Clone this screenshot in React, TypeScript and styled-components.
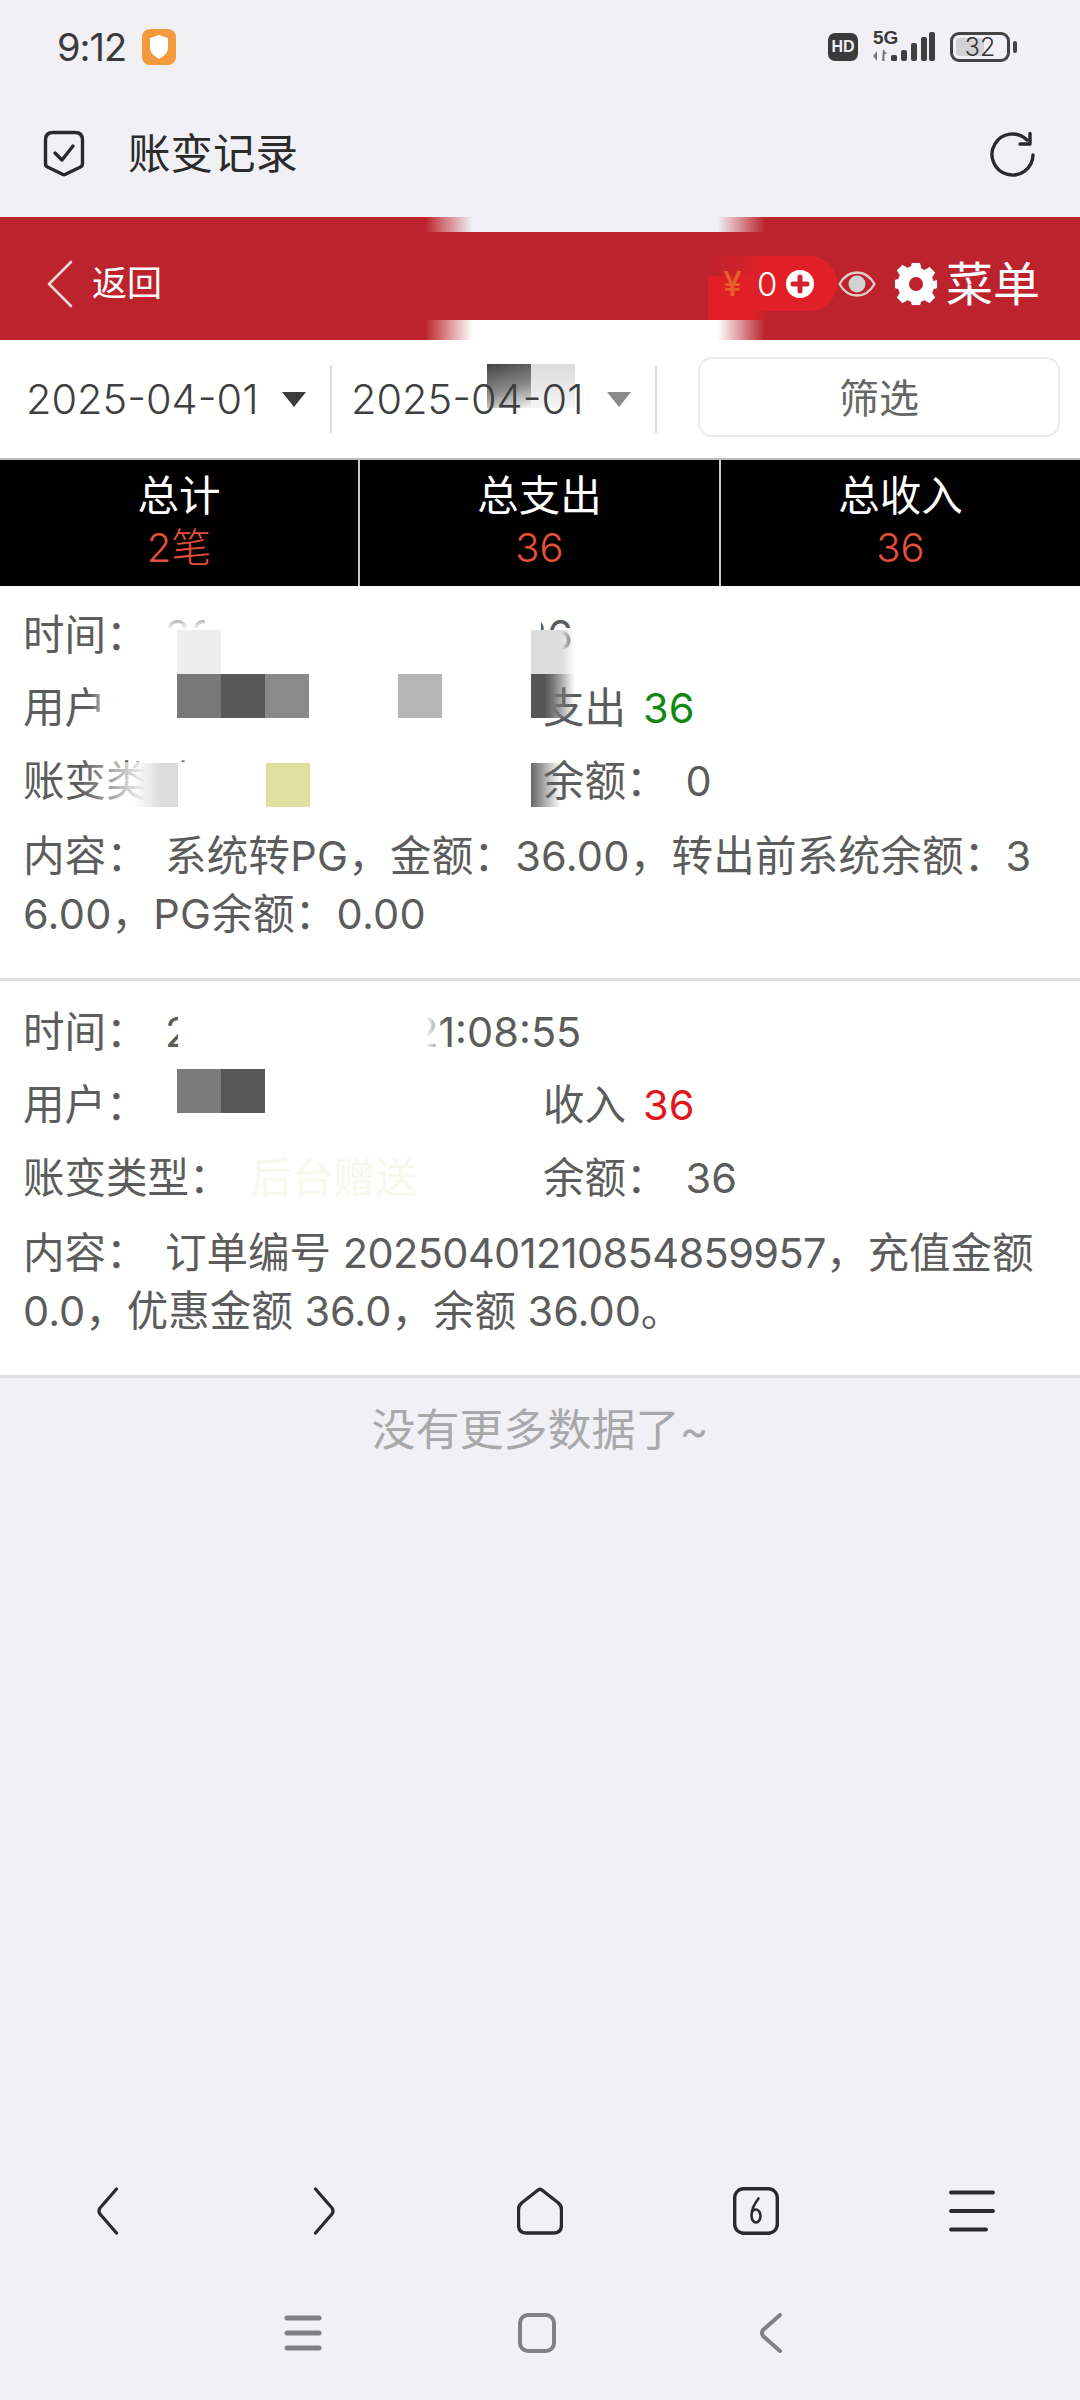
import React from 'react';
import styled, { createGlobalStyle } from 'styled-components';

const GlobalStyle = createGlobalStyle`
  html, body {
    margin: 0;
    padding: 0;
    background: #f0f0f5;
    font-family: Inter, "Noto Sans CJK SC", sans-serif;
  }
  * { box-sizing: border-box; }
`;

const Page = styled.div`
  width: 1080px;
  height: 2400px;
  display: flex;
  flex-direction: column;
  background: #f0f0f5;
  overflow: hidden;
`;

const StatusBar = styled.div`
  height: 100px;
  padding: 30px 70px 0 57px;
  display: flex;
  align-items: flex-start;
  justify-content: space-between;
`;

const StatusLeft = styled.div`
  display: flex;
  align-items: center;
  gap: 15px;
  height: 34px;
`;

const Clock = styled.span`
  font-size: 38px;
  line-height: 34px;
  color: #3a3a3a;
  letter-spacing: -1px;
`;

const StatusRight = styled.div`
  display: flex;
  align-items: center;
  gap: 15px;
  height: 34px;
`;

const HdBadge = styled.span`
  width: 30px;
  height: 28px;
  border-radius: 7px;
  background: #3a3a3a;
  color: #f0f0f5;
  font: 700 16px/28px "Liberation Sans", sans-serif;
  text-align: center;
`;

const Signal = styled.div`
  position: relative;
  width: 62px;
  height: 30px;
`;

const FiveG = styled.span`
  position: absolute;
  left: 0;
  top: -3px;
  font: 700 19px/18px "Liberation Sans", sans-serif;
  color: #3a3a3a;
`;

const Battery = styled.div`
  position: relative;
  width: 60px;
  height: 30px;
  border: 3px solid #444;
  border-radius: 9px;
  display: flex;
  align-items: center;
  justify-content: center;
  font-size: 25px;
  font-weight: 300;
  color: #333;
  &::before {
    content: '';
    position: absolute;
    left: 3px;
    top: 3px;
    bottom: 3px;
    width: 28px;
    background: #d2d2d6;
    border-radius: 3px;
  }
  &::after {
    content: '';
    position: absolute;
    right: -10px;
    top: 6px;
    width: 4px;
    height: 12px;
    background: #444;
    border-radius: 2px;
  }
`;

const BatteryValue = styled.span`
  position: relative;
`;

const AddressBar = styled.div`
  height: 117px;
  padding: 0 44px 10px 43px;
  display: flex;
  align-items: center;
`;

const PageTitle = styled.span`
  margin: 0 0 6px 43px;
  flex: 1;
  font-size: 42.5px;
  color: #2b2b2b;
`;

const RedHeader = styled.div`
  position: relative;
  height: 123px;
  background: #bc232c;
  display: flex;
  align-items: center;
  padding: 10px 40px 0 46px;
  color: #fff;
`;

const BackLink = styled.div`
  display: flex;
  align-items: center;
  gap: 18px;
  flex: 1;
  font-size: 35px;
`;

const BackText = styled.span`
  margin-bottom: 6px;
`;

const Smear = styled.div<{ $edge: 'top' | 'bottom' }>`
  position: absolute;
  left: 425px;
  width: 340px;
  ${(p) => (p.$edge === 'top' ? 'top: 0; height: 15px;' : 'bottom: 0; height: 20px;')}
  background: linear-gradient(
    90deg,
    transparent 0,
    ${(p) => (p.$edge === 'top' ? '#f0f0f5' : '#fff')} 14%,
    ${(p) => (p.$edge === 'top' ? '#f0f0f5' : '#fff')} 86%,
    transparent 100%
  );
`;

const WalletPatch = styled.div`
  position: absolute;
  left: 708px;
  top: 59px;
  width: 62px;
  height: 44px;
  background: linear-gradient(90deg, #e02026 0%, #e02026 70%, #e0202600 100%);
`;

const WalletPill = styled.div`
  position: relative;
  width: 129px;
  height: 55px;
  margin-right: 1px;
  border-radius: 0 28px 28px 0;
  background: linear-gradient(90deg, #e0202600 0%, #e02026 45%);
  display: flex;
  align-items: center;
  padding-left: 15px;
  font-size: 33px;
  font-weight: 300;
`;

const Yen = styled.span`
  color: #e8762a;
  font-size: 34px;
  font-weight: 500;
  width: 34px;
  opacity: 0.75;
`;

const PillValue = styled.span`
  width: 29px;
`;

const EyeWrap = styled.span`
  display: flex;
  margin-right: 19px;
`;

const MenuLabel = styled.span`
  margin-left: 9px;
  font-size: 47px;
  line-height: 50px;
`;

const FilterBar = styled.div`
  height: 118px;
  background: #fff;
  display: flex;
  align-items: center;
  position: relative;
`;

const DateField = styled.div<{ $width: number; $pad: number }>`
  width: ${(p) => p.$width}px;
  height: 68px;
  padding-left: ${(p) => p.$pad}px;
  border-right: 2px solid #dcdcdc;
  display: flex;
  align-items: center;
  color: #3f3f3f;
  font-size: 41.5px;
  font-weight: 300;
  position: relative;
  z-index: 1;
`;

const Caret = styled.span<{ $faded?: boolean }>`
  width: 0;
  height: 0;
  margin-left: 24px;
  border-left: 12px solid transparent;
  border-right: 12px solid transparent;
  border-top: 15px solid ${(p) => (p.$faded ? '#8a8a8a' : '#3c3c3c')};
`;

const FilterButton = styled.div`
  width: 362px;
  height: 80px;
  margin: 0 0 4px 41px;
  padding-bottom: 3px;
  border: 2px solid #ececec;
  border-radius: 14px;
  display: flex;
  align-items: center;
  justify-content: center;
  font-size: 40px;
  color: #666;
`;

const Totals = styled.div`
  height: 128px;
  background: #000;
  border-top: 2px solid #bbb;
  display: grid;
  grid-template-columns: 360px 361px 359px;
`;

const TotalCell = styled.div`
  display: flex;
  flex-direction: column;
  align-items: center;
  padding-top: 10px;
  border-right: 2px solid #c8c8c8;
  &:last-child { border-right: 0; }
`;

const TotalLabel = styled.span`
  font-size: 41.5px;
  line-height: 52px;
  color: #fff;
`;

const TotalValue = styled.span`
  font-size: 40px;
  line-height: 52px;
  color: #e84f3a;
  font-weight: 300;
`;

const Card = styled.div<{ $top?: number }>`
  position: relative;
  background: #fff;
  padding: ${(p) => p.$top ?? 13}px 23px 35px;
  border-bottom: 3px solid #dedede;
  color: #5c5c5c;
  font-size: 41.5px;
`;

const Row = styled.div`
  display: grid;
  grid-template-columns: 520px 1fr;
  height: 73px;
  line-height: 73px;
`;

const Field = styled.div`
  white-space: nowrap;
`;

const Label = styled.span`
  display: inline-block;
  min-width: 142px;
`;

const Amount = styled.span<{ $color: string }>`
  margin-left: 17px;
  color: ${(p) => p.$color};
`;

const BalanceLabel = styled.span`
  margin-right: 18px;
`;

const Content = styled.div<{ $tracking?: number }>`
  margin-top: 9px;
  padding-right: 2px;
  line-height: 58px;
  word-break: break-all;
  letter-spacing: ${(p) => p.$tracking ?? 0}px;
`;

const OrderNumber = styled.span`
  letter-spacing: -0.6px;
`;

const FaintValue = styled.span`
  margin-left: 20px;
  color: #f7f8ee;
`;

const Tile = styled.div<{ $x: number; $y: number; $w?: number; $h?: number; $bg: string }>`
  position: absolute;
  left: ${(p) => p.$x}px;
  top: ${(p) => p.$y}px;
  width: ${(p) => p.$w ?? 44}px;
  height: ${(p) => p.$h ?? 44}px;
  background: ${(p) => p.$bg};
`;

const EndOfList = styled.div`
  padding-top: 22px;
  text-align: center;
  font-size: 44px;
  line-height: 60px;
  color: #a9a9a9;
`;

const BrowserNav = styled.div`
  margin-top: auto;
  display: grid;
  grid-template-columns: repeat(5, 216px);
  height: 48px;
  margin-bottom: 78px;
`;

const SystemNav = styled.div`
  display: grid;
  grid-template-columns: repeat(3, 234px);
  justify-content: center;
  height: 40px;
  margin-bottom: 47px;
  padding-right: 6px;
`;

const NavSlot = styled.div`
  display: flex;
  align-items: center;
  justify-content: center;
`;

const Icon = styled.svg`
  display: block;
  fill: none;
  stroke-linecap: round;
  stroke-linejoin: round;
`;

const ShieldBadge = () => (
  <svg width="36" height="36" viewBox="0 0 36 36">
    <rect x="1" y="0" width="34" height="36" rx="8" fill="#f59a3c" />
    <path d="M18 6l9 3v9c0 6-4 9-9 12-5-3-9-6-9-12V9z" fill="#fff" />
  </svg>
);

const SignalBars = () => (
  <Icon width="62" height="30" viewBox="0 0 62 30" style={{ position: 'absolute', left: 0, top: 0 }}>
    <path d="M4 19l-4 5 4 5zM10 17l4 5h-2.500v7H9z" fill="#777" />
    <rect x="18" y="23" width="6" height="6" rx="1.500" fill="#3f3f3f" />
    <rect x="28" y="18" width="6" height="11" rx="2" fill="#3f3f3f" />
    <rect x="38" y="11" width="6" height="18" rx="2" fill="#3f3f3f" />
    <rect x="48" y="5" width="6" height="24" rx="2" fill="#3f3f3f" />
    <rect x="56" y="0" width="6" height="29" rx="2" fill="#3f3f3f" />
  </Icon>
);

const VerifiedShield = () => (
  <Icon width="42" height="47" viewBox="0 0 42 47" stroke="#2a2a2a" strokeWidth="3.4">
    <path d="M10 2.500h22q7.500 0 7.500 7.500v24q0 2-2 3L22 44.500q-1 .5-2 0L4.500 37q-2-1-2-3V10q0-7.500 7.500-7.500z" />
    <path d="M12 23l7 7 11-14" />
  </Icon>
);

const Refresh = () => (
  <Icon width="46" height="46" viewBox="0 0 46 46" stroke="#2a2a2a" strokeWidth="3.4">
    <path d="M37 9A20.500 20.500 0 1 0 43 24" />
    <path d="M40 2.500V13H30" />
  </Icon>
);

const Chevron = () => (
  <Icon width="28" height="48" viewBox="0 0 28 48" stroke="#f2d5d6" strokeWidth="2.600">
    <path d="M25 2L3 24l22 22" />
  </Icon>
);

const PlusCircle = () => (
  <svg width="28" height="28" viewBox="0 0 28 28">
    <circle cx="14" cy="14" r="14" fill="#fff" />
    <path d="M14 7v14M7 14h14" stroke="#d4202a" strokeWidth="5" strokeLinecap="round" />
  </svg>
);

const Eye = () => (
  <Icon width="38" height="26" viewBox="0 0 38 26" stroke="#e6c9ca" strokeWidth="2.400">
    <path d="M1.500 13C6 5 12 1.500 19 1.500S32 5 36.500 13C32 21 26 24.500 19 24.500S6 21 1.500 13z" />
    <circle cx="19" cy="13" r="8.500" fill="#d2d2d2" stroke="none" />
  </Icon>
);

const Gear = () => (
  <svg width="42" height="42" viewBox="0 0 42 42">
    <path
      fill="#fff"
      fillRule="evenodd"
      d="M17 0h8l1.300 5.600 3.400 1.400 4.900-3 5.600 5.600-3 4.900 1.400 3.400L42 17v8l-3.400 1.300-1.400 3.400 3 4.900-5.600 5.600-4.900-3-3.400 1.400L25 42h-8l-1.300-3.400-3.400-1.400-4.900 3-5.600-5.600 3-4.900-1.400-3.400L0 25v-8l3.400-1.300 1.400-3.400-3-4.900L7.400 1.800l4.900 3 3.400-1.400zM21 14a7 7 0 1 0 0 14 7 7 0 0 0 0-14z"
    />
  </svg>
);

const NavBack = () => (
  <Icon width="24" height="48" viewBox="0 0 24 48" stroke="#2a2a2a" strokeWidth="3.200">
    <path d="M20.500 2L4 21q-2 3 0 6l16.500 19" />
  </Icon>
);

const NavForward = () => (
  <Icon width="24" height="48" viewBox="0 0 24 48" stroke="#2a2a2a" strokeWidth="3.200">
    <path d="M3.500 2L20 21q2 3 0 6L3.500 46" />
  </Icon>
);

const NavHome = () => (
  <Icon width="46" height="48" viewBox="0 0 46 48" stroke="#2a2a2a" strokeWidth="3.400">
    <path d="M20.500 3.500q2.500-2.500 5 0L41.500 16q3 3 3 6.500V38q0 8-8 8H9.500q-8 0-8-8V22.500q0-3.500 3-6.500z" />
  </Icon>
);

const NavTabs = () => (
  <Icon width="46" height="48" viewBox="0 0 46 48" stroke="#2a2a2a" strokeWidth="3.400">
    <rect x="1.700" y="1.700" width="42.600" height="44.600" rx="9" />
    <path
      d="M25.500 11.500C22 16 18.500 22 18.500 28.500c0 4 2 7 4.500 7s4.500-3 4.500-6.500-2-6.500-4.500-6.500-4 2-4.500 4.500"
      strokeWidth="2.600"
    />
  </Icon>
);

const NavMenu = () => (
  <Icon width="46" height="42" viewBox="0 0 46 42" stroke="#2a2a2a" strokeWidth="3.800">
    <path d="M2 2.500h42M2 21h42M2 39.500h35" />
  </Icon>
);

const SysMenu = () => (
  <Icon width="38" height="36" viewBox="0 0 38 36" stroke="#808085" strokeWidth="5">
    <path d="M3 3h32M3 18h32M3 33h32" />
  </Icon>
);

const SysHome = () => (
  <Icon width="38" height="40" viewBox="0 0 38 40" stroke="#808085" strokeWidth="4">
    <rect x="2" y="2" width="34" height="36" rx="8" />
  </Icon>
);

const SysBack = () => (
  <Icon width="24" height="40" viewBox="0 0 24 40" stroke="#808085" strokeWidth="4">
    <path d="M21 2L4 17q-2 3 0 6l17 15" />
  </Icon>
);

export default function App() {
  return (
    <Page>
      <GlobalStyle />

      <StatusBar>
        <StatusLeft>
          <Clock>9:12</Clock>
          <ShieldBadge />
        </StatusLeft>
        <StatusRight>
          <HdBadge>HD</HdBadge>
          <Signal>
            <SignalBars />
            <FiveG>5G</FiveG>
          </Signal>
          <Battery>
            <BatteryValue>32</BatteryValue>
          </Battery>
        </StatusRight>
      </StatusBar>

      <AddressBar>
        <VerifiedShield />
        <PageTitle>账变记录</PageTitle>
        <Refresh />
      </AddressBar>

      <RedHeader>
        <Smear $edge="top" />
        <Smear $edge="bottom" />
        <WalletPatch />
        <BackLink>
          <Chevron />
          <BackText>返回</BackText>
        </BackLink>
        <WalletPill>
          <Yen>¥</Yen>
          <PillValue>0</PillValue>
          <PlusCircle />
        </WalletPill>
        <EyeWrap>
          <Eye />
        </EyeWrap>
        <Gear />
        <MenuLabel>菜单</MenuLabel>
      </RedHeader>

      <FilterBar>
        <Tile $x={487} $y={24} $bg="linear-gradient(165deg, #444 0%, #8a8a8a 55%, #f4f4f4 100%)" />
        <Tile $x={531} $y={24} $bg="linear-gradient(180deg, #dcdcdc 0%, #f4f4f4 100%)" />
        <DateField $width={332} $pad={26}>
          2025-04-01
          <Caret />
        </DateField>
        <DateField $width={325} $pad={19}>
          2025-04-01
          <Caret $faded />
        </DateField>
        <FilterButton>筛选</FilterButton>
      </FilterBar>

      <Totals>
        <TotalCell>
          <TotalLabel>总计</TotalLabel>
          <TotalValue>2笔</TotalValue>
        </TotalCell>
        <TotalCell>
          <TotalLabel>总支出</TotalLabel>
          <TotalValue>36</TotalValue>
        </TotalCell>
        <TotalCell>
          <TotalLabel>总收入</TotalLabel>
          <TotalValue>36</TotalValue>
        </TotalCell>
      </Totals>

      <Card>
        <Row>
          <Field>
            <Label>时间：</Label>2025-04-01 21:19:26
          </Field>
        </Row>
        <Row>
          <Field>
            <Label>用户：</Label>
          </Field>
          <Field>
            支出
            <Amount $color="#118811">36</Amount>
          </Field>
        </Row>
        <Row>
          <Field>
            <Label>账变类型：</Label>
          </Field>
          <Field>
            <BalanceLabel>余额：</BalanceLabel>0
          </Field>
        </Row>
        <Content $tracking={0.25}>
          <Label>内容：</Label>系统转PG，金额：36.00，转出前系统余额：36.00，PG余额：0.00
        </Content>

        {/* pixelated cover over the private values */}
        <Tile $x={165} $y={22} $w={40} $h={62} $bg="linear-gradient(180deg, #ffffff00 0%, #fff 35%)" />
        <Tile $x={205} $y={22} $w={336} $h={62} $bg="#fff" />
        <Tile $x={90} $y={86} $w={80} $h={60} $bg="linear-gradient(90deg, #ffffff00 0%, #fff 30%)" />
        <Tile $x={80} $y={176} $w={230} $h={60} $bg="linear-gradient(90deg, #ffffff00 0%, #fff 30%)" />
        <Tile $x={177} $y={44} $bg="#eeeeee" />
        <Tile $x={177} $y={88} $bg="#787878" />
        <Tile $x={221} $y={88} $bg="#575757" />
        <Tile $x={265} $y={88} $bg="#8a8a8a" />
        <Tile $x={398} $y={88} $bg="#b6b6b6" />
        <Tile $x={531} $y={44} $bg="linear-gradient(90deg, #dddddd 70%, #ffffff00 100%)" />
        <Tile $x={531} $y={88} $w={22} $bg="linear-gradient(90deg, #555 60%, #777 100%)" />
        <Tile $x={553} $y={88} $w={22} $bg="linear-gradient(90deg, #777 0%, #ffffff00 100%)" />
        <Tile $x={134} $y={177} $bg="linear-gradient(90deg, #dddddd00 0%, #dcdcdc 60%)" />
        <Tile $x={266} $y={177} $bg="#dfe0a0" />
        <Tile $x={531} $y={177} $w={30} $bg="linear-gradient(90deg, #666 0%, #ffffff00 100%)" />
      </Card>

      <Card $top={15}>
        <Row>
          <Field>
            <Label>时间：</Label>2025-04-01 21:08:55
          </Field>
        </Row>
        <Row>
          <Field>
            <Label>用户：</Label>
          </Field>
          <Field>
            收入
            <Amount $color="#e0161c">36</Amount>
          </Field>
        </Row>
        <Row>
          <Field>
            <Label>账变类型：</Label>
            <FaintValue>后台赠送</FaintValue>
          </Field>
          <Field>
            <BalanceLabel>余额：</BalanceLabel>36
          </Field>
        </Row>
        <Content>
          <Label>内容：</Label>订单编号 <OrderNumber>20250401210854859957</OrderNumber>，充值金额 0.0，优惠金额 36.0，余额 36.00。
        </Content>

        <Tile $x={178} $y={22} $w={267} $h={62} $bg="linear-gradient(90deg, #fff 93%, #ffffff00 100%)" />
        <Tile $x={177} $y={88} $bg="#7c7c7c" />
        <Tile $x={221} $y={88} $bg="#575757" />
      </Card>

      <EndOfList>没有更多数据了~</EndOfList>

      <BrowserNav>
        <NavSlot><NavBack /></NavSlot>
        <NavSlot><NavForward /></NavSlot>
        <NavSlot><NavHome /></NavSlot>
        <NavSlot><NavTabs /></NavSlot>
        <NavSlot><NavMenu /></NavSlot>
      </BrowserNav>

      <SystemNav>
        <NavSlot><SysMenu /></NavSlot>
        <NavSlot><SysHome /></NavSlot>
        <NavSlot><SysBack /></NavSlot>
      </SystemNav>
    </Page>
  );
}
